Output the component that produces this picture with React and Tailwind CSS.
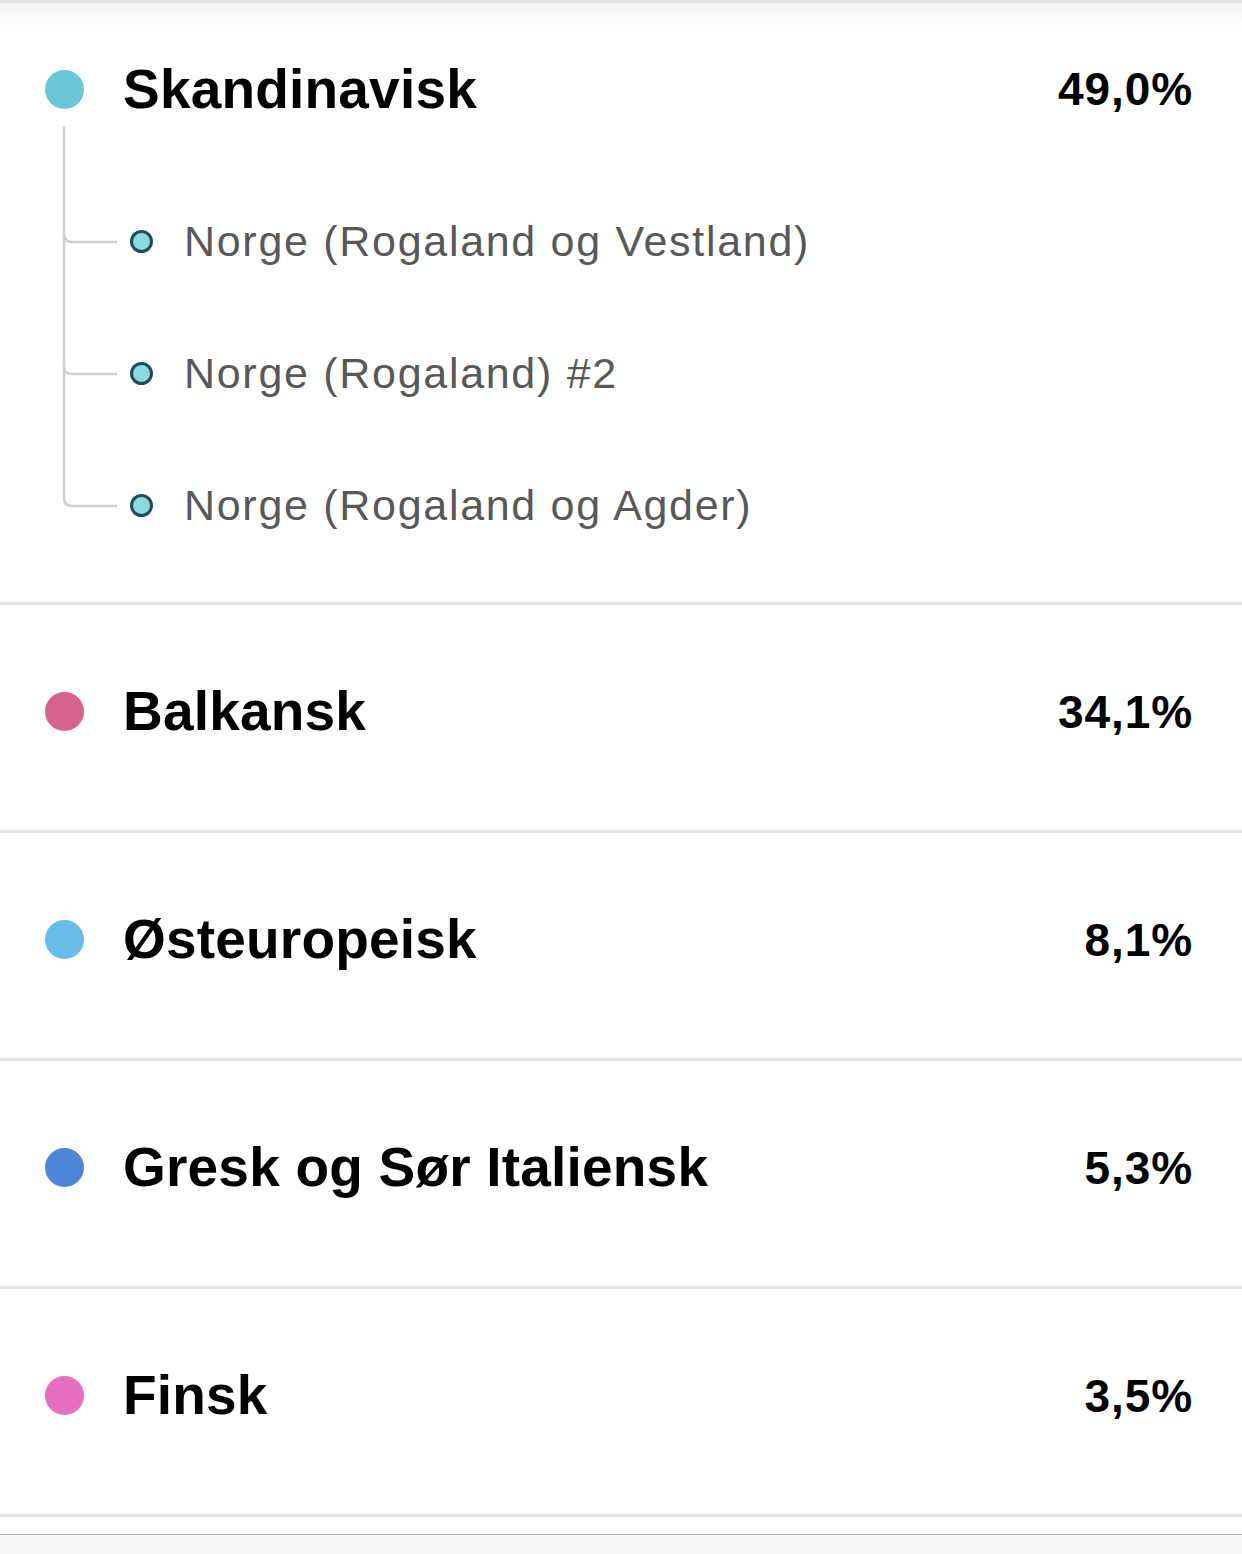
import React from "react";

const rows = [
  { name: "Balkansk", pct: "34,1%", color: "bg-[#d5628f]" },
  { name: "Østeuropeisk", pct: "8,1%", color: "bg-[#67bce8]" },
  { name: "Gresk og Sør Italiensk", pct: "5,3%", color: "bg-[#4d86d5]" },
  { name: "Finsk", pct: "3,5%", color: "bg-[#e76fc2]" },
];

const subs = ["Norge (Rogaland og Vestland)", "Norge (Rogaland) #2", "Norge (Rogaland og Agder)"];

function Heading({ name, pct, color }) {
  return (
    <div className="flex items-center pl-[45px] pr-[49px]">
      <span className={`h-[39px] w-[39px] shrink-0 rounded-full ${color}`} />
      <span className="ml-[39px] flex-1 text-[55px] font-bold leading-none tracking-[0.2px] text-black">{name}</span>
      <span className="text-[46px] font-bold leading-none tracking-[0.9px] text-black">{pct}</span>
    </div>
  );
}

export default function App() {
  return (
    <div className="min-h-[1554px] bg-white font-['Liberation_Sans',Arial,sans-serif]">
      <div className="h-[3px] bg-[#e4e4e4]" />

      <section className="relative bg-[linear-gradient(to_bottom,#f4f4f4,#ffffff_28px)]">
        <svg className="absolute left-0 top-0" width="130" height="520" fill="none" stroke="#cfcfcf" strokeWidth="2.5">
          <path d="M64 123 V495 Q64 503 72 503 H117" />
          <path d="M64 231 Q64 239 72 239 H117" />
          <path d="M64 363 Q64 371 72 371 H117" />
        </svg>
        <div className="flex h-[172px] items-center">
          <div className="w-full">
            <Heading name="Skandinavisk" pct="49,0%" color="bg-[#6ac7d8]" />
          </div>
        </div>
        <div className="pb-[31px]">
          {subs.map((s) => (
            <div key={s} className="flex h-[132px] items-center pl-[130px]">
              <span className="h-[23px] w-[23px] rounded-full border-[3px] border-[#1e4d58] bg-[#8ed8e3]" />
              <span className="ml-[31px] text-[43px] leading-none tracking-[1.7px] text-[#585858]">{s}</span>
            </div>
          ))}
        </div>
      </section>

      {rows.map((r) => (
        <div key={r.name} className="flex h-[228px] items-center border-t-[3px] border-[#e4e4e4] pb-[12px]">
          <div className="w-full">
            <Heading {...r} />
          </div>
        </div>
      ))}

      <div className="h-[20px] border-t-[3px] border-[#e4e4e4]" />
      <div className="h-[19px] border-t border-[#b0b0b0] bg-[#f8f8f8]" />
    </div>
  );
}
